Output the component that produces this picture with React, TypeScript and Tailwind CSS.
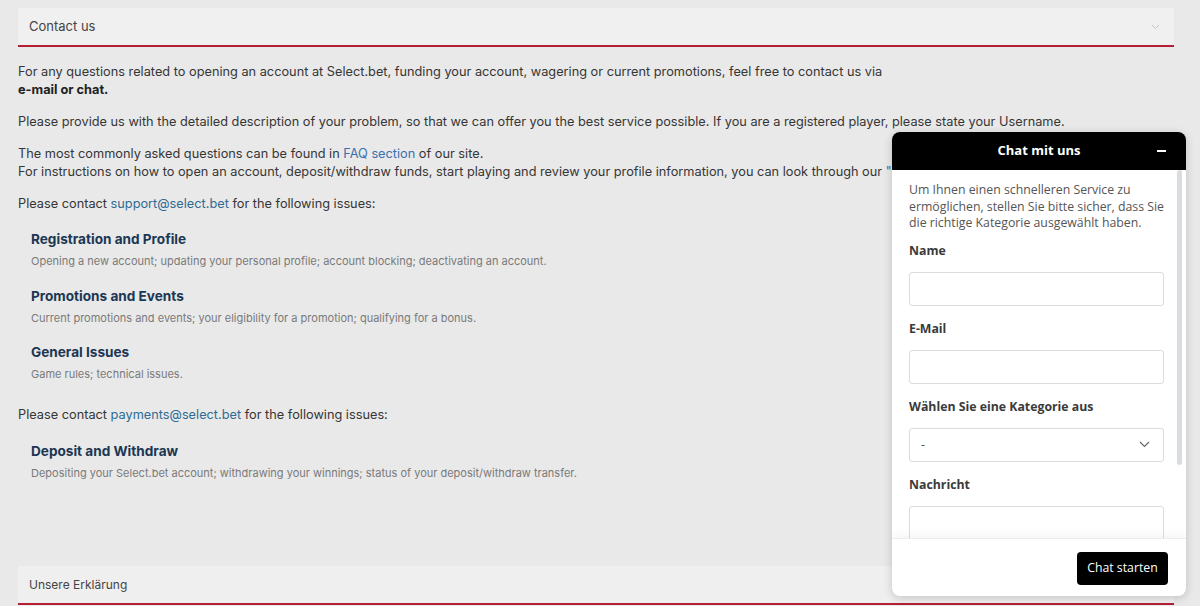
import React from 'react';

const sans = { fontFamily: 'Inter, "Liberation Sans", sans-serif' };
const chatFont = { fontFamily: '"Open Sans", "Noto Sans", sans-serif' };

const Issue = ({ title, desc }: { title: string; desc: string }) => (
  <div className="pl-[13px]">
    <div className="h-5 text-[13.6px] leading-5 font-bold text-[#1b3753]">{title}</div>
    <div className="mt-1 text-[11px] leading-4 text-[#7a7a7a]">{desc}</div>
  </div>
);

const Field = ({ label, children }: { label: string; children: React.ReactNode }) => (
  <div className="mb-[15px]">
    <div className="text-[12.3px] leading-4 font-bold text-[#3a3a3a] mb-[13px]">{label}</div>
    {children}
  </div>
);

const ChatWidget = () => (
  <div
    className="absolute left-[892px] top-[132px] w-[294px] h-[464px] bg-white rounded-lg shadow-[0_2px_10px_rgba(0,0,0,0.18)] flex flex-col overflow-hidden"
    style={chatFont}
  >
    <div className="h-[38px] bg-black flex items-center justify-center relative shrink-0">
      <span className="text-white text-[13px] font-bold">Chat mit uns</span>
      <span className="absolute right-[20px] top-[18px] w-[9px] h-[2px] bg-white" />
    </div>
    <div className="flex flex-1 min-h-0">
      <div className="flex-1 pl-[17px] pr-[13px] pt-[12px] overflow-hidden">
        <p className="w-[262px] text-[12.3px] leading-[16.5px] text-[#555] mb-[11px]">
          Um Ihnen einen schnelleren Service zu ermöglichen, stellen Sie bitte sicher, dass Sie die richtige Kategorie ausgewählt haben.
        </p>
        <Field label="Name">
          <div className="h-[34px] border border-[#dcdcdc] rounded-[3px]" />
        </Field>
        <Field label="E-Mail">
          <div className="h-[34px] border border-[#dcdcdc] rounded-[3px]" />
        </Field>
        <Field label="Wählen Sie eine Kategorie aus">
          <div className="h-[34px] border border-[#dcdcdc] rounded-[3px] flex items-center justify-between pl-[11px] pr-[13px]">
            <span className="text-[12px] text-[#444]">-</span>
            <svg width="11" height="7" viewBox="0 0 11 7" fill="none">
              <path d="M1 1l4.5 4.5L10 1" stroke="#666" strokeWidth="1.2" />
            </svg>
          </div>
        </Field>
        <Field label="Nachricht">
          <div className="h-[70px] border border-[#dcdcdc] rounded-[3px]" />
        </Field>
      </div>
      <div className="w-[9px] pr-[4px] shrink-0">
        <div className="w-[5px] h-[295px] bg-[#dadde0] rounded-sm" />
      </div>
    </div>
    <div className="h-[58px] shrink-0 border-t border-[#ececec] shadow-[0_-4px_8px_rgba(0,0,0,0.04)] flex items-start justify-end pt-[13px] pr-[18px]">
      <button className="h-[33px] w-[91px] bg-black text-white text-[12.3px] rounded">Chat starten</button>
    </div>
  </div>
);

export default function App() {
  return (
    <div className="relative w-[1200px] h-[606px] overflow-hidden bg-[#e9e9e9] pl-[18px] pr-[26px] pt-2 text-[#363636]" style={sans}>
      <div className="h-[39px] bg-[#f0f0f0] border-b-2 border-[#b31f33] flex items-center justify-between pl-[11px] pr-[14px]">
        <span className="text-[13px] text-[#444]">Contact us</span>
        <svg width="9" height="6" viewBox="0 0 9 6" fill="none">
          <path d="M1 1l3.5 3.5L8 1" stroke="#c4c4c4" strokeWidth="1" />
        </svg>
      </div>

      <div className="pt-4 text-[12.75px] leading-[18px]">
        <p className="mb-[14px]">
          For any questions related to opening an account at Select.bet, funding your account, wagering or current promotions, feel free to contact us via
          <br />
          <b className="text-[#222]">e-mail or chat.</b>
        </p>
        <p className="mb-[14px]">
          Please provide us with the detailed description of your problem, so that we can offer you the best service possible. If you are a registered player, please state your Username.
        </p>
        <p className="mb-[14px] whitespace-nowrap">
          The most commonly asked questions can be found in <span className="text-[#3a6fb0]">FAQ section</span> of our site.
          <br />
          For instructions on how to open an account, deposit/withdraw funds, start playing and review your profile information, you can look through our <span className="text-[#3a6fb0]">"Getting Started" guide</span>.
        </p>
        <p className="mb-4">
          Please contact <span className="text-[#2f6b93]">support@select.bet</span> for the following issues:
        </p>

        <div className="flex flex-col gap-[16.5px]">
          <Issue title="Registration and Profile" desc="Opening a new account; updating your personal profile; account blocking; deactivating an account." />
          <Issue title="Promotions and Events" desc="Current promotions and events; your eligibility for a promotion; qualifying for a bonus." />
          <Issue title="General Issues" desc="Game rules; technical issues." />
        </div>

        <p className="mt-6 mb-[17px]">
          Please contact <span className="text-[#2f6b93]">payments@select.bet</span> for the following issues:
        </p>
        <Issue title="Deposit and Withdraw" desc="Depositing your Select.bet account; withdrawing your winnings; status of your deposit/withdraw transfer." />
      </div>

      <div className="absolute left-[18px] right-[26px] top-[566px] h-[39px] bg-[#efefef] border-b-2 border-[#b31f33] flex items-center pl-[11px]">
        <span className="text-[12px] text-[#444]">Unsere Erklärung</span>
      </div>

      <ChatWidget />
    </div>
  );
}
